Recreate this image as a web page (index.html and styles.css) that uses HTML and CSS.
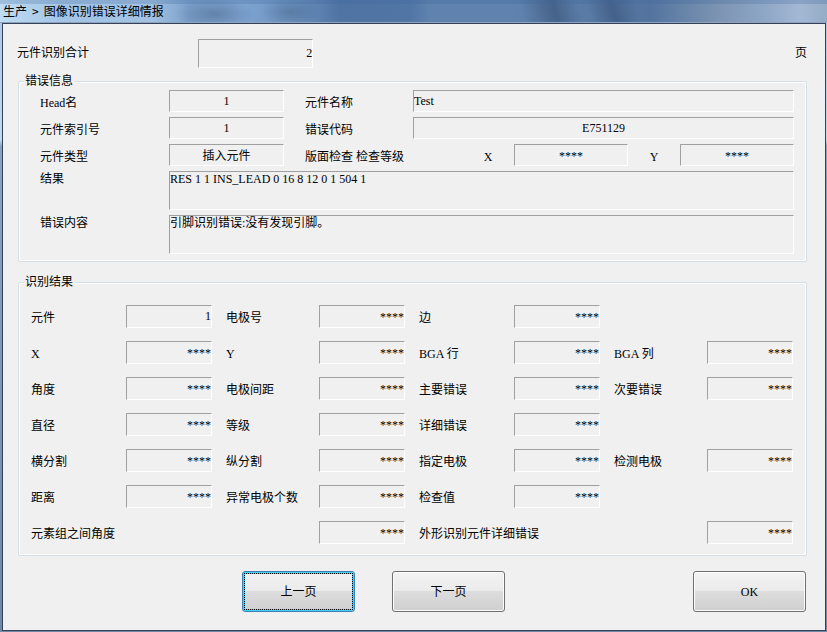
FILE: index.html
```
<!DOCTYPE html>
<html lang="zh-CN">
<head>
    <meta charset="utf-8">
    <title>图像识别错误详细情报</title>
    <link rel="stylesheet" href="styles.css">
</head>
<body>
    <div class="window">
        <h1 class="title-bar">
            <span>生产</span>
            <span>&gt;</span>
            <span>图像识别错误详细情报</span>
        </h1>

        <form class="panel">
            <div class="summary">
                <label for="total">元件识别合计</label>
                <input class="field num total" id="total" value="2" readonly>
                <span class="unit">页</span>
            </div>

            <fieldset class="group">
                <legend>错误信息</legend>
                <div class="info-grid">
                    <label for="head">Head名</label>
                    <input class="field center" id="head" value="1" readonly>
                    <label class="next" for="part-name">元件名称</label>
                    <input class="field wide" id="part-name" value="Test" readonly>

                    <label for="part-index">元件索引号</label>
                    <input class="field center" id="part-index" value="1" readonly>
                    <label class="next" for="error-code">错误代码</label>
                    <input class="field center wide" id="error-code" value="E751129" readonly>

                    <label for="part-type">元件类型</label>
                    <input class="field center" id="part-type" value="插入元件" readonly>
                    <span class="next grade">版面检查 检查等级</span>
                    <label class="axis" for="grade-x">X</label>
                    <input class="field center stars" id="grade-x" value="****" readonly>
                    <label class="axis" for="grade-y">Y</label>
                    <input class="field center stars" id="grade-y" value="****" readonly>

                    <label class="top" for="result">结果</label>
                    <textarea class="field memo" id="result" readonly>RES 1 1 INS_LEAD 0 16 8 12 0 1 504 1</textarea>

                    <label class="top" for="error-text">错误内容</label>
                    <textarea class="field memo" id="error-text" readonly>引脚识别错误:没有发现引脚。</textarea>
                </div>
            </fieldset>

            <fieldset class="group">
                <legend>识别结果</legend>
                <div class="result-grid">
                    <label class="c1" for="part">元件</label>
                    <input class="field num" id="part" value="1" readonly>
                    <label class="c2" for="pole-no">电极号</label>
                    <input class="field num stars" id="pole-no" value="****" readonly>
                    <label class="c3" for="side">边</label>
                    <input class="field num stars" id="side" value="****" readonly>

                    <label class="c1" for="pos-x">X</label>
                    <input class="field num stars" id="pos-x" value="****" readonly>
                    <label class="c2" for="pos-y">Y</label>
                    <input class="field num stars" id="pos-y" value="****" readonly>
                    <label class="c3" for="bga-row">BGA 行</label>
                    <input class="field num stars" id="bga-row" value="****" readonly>
                    <label class="c4" for="bga-col">BGA 列</label>
                    <input class="field num stars" id="bga-col" value="****" readonly>

                    <label class="c1" for="angle">角度</label>
                    <input class="field num stars" id="angle" value="****" readonly>
                    <label class="c2" for="pitch">电极间距</label>
                    <input class="field num stars" id="pitch" value="****" readonly>
                    <label class="c3" for="main-error">主要错误</label>
                    <input class="field num stars" id="main-error" value="****" readonly>
                    <label class="c4" for="sub-error">次要错误</label>
                    <input class="field num stars" id="sub-error" value="****" readonly>

                    <label class="c1" for="diameter">直径</label>
                    <input class="field num stars" id="diameter" value="****" readonly>
                    <label class="c2" for="level">等级</label>
                    <input class="field num stars" id="level" value="****" readonly>
                    <label class="c3" for="detail-error">详细错误</label>
                    <input class="field num stars" id="detail-error" value="****" readonly>

                    <label class="c1" for="split-h">横分割</label>
                    <input class="field num stars" id="split-h" value="****" readonly>
                    <label class="c2" for="split-v">纵分割</label>
                    <input class="field num stars" id="split-v" value="****" readonly>
                    <label class="c3" for="set-pole">指定电极</label>
                    <input class="field num stars" id="set-pole" value="****" readonly>
                    <label class="c4" for="found-pole">检测电极</label>
                    <input class="field num stars" id="found-pole" value="****" readonly>

                    <label class="c1" for="distance">距离</label>
                    <input class="field num stars" id="distance" value="****" readonly>
                    <label class="c2" for="bad-poles">异常电极个数</label>
                    <input class="field num stars" id="bad-poles" value="****" readonly>
                    <label class="c3" for="check-value">检查值</label>
                    <input class="field num stars" id="check-value" value="****" readonly>

                    <label class="c1 long" for="group-angle">元素组之间角度</label>
                    <input class="field num stars" id="group-angle" value="****" readonly>
                    <label class="c3 long" for="shape-error">外形识别元件详细错误</label>
                    <input class="field num stars" id="shape-error" value="****" readonly>
                </div>
            </fieldset>

            <div class="buttons">
                <button class="btn prev default" type="button">上一页</button>
                <button class="btn next-page" type="button">下一页</button>
                <button class="btn ok" type="button">OK</button>
            </div>
        </form>
    </div>
</body>
</html>
```
FILE: styles.css
```
* {
    box-sizing: border-box;
}

body {
    margin: 0;
    font: 12px/16px "Liberation Serif", "Noto Sans CJK SC", serif;
    color: #000;
    background-color: #f0f0f0;
}

.window {
    display: flex;
    flex-direction: column;
    min-height: 100vh;
    padding: 0 1px 1px 2px;
    background: linear-gradient(#a9c6e2 0, #c3d9ec 140px, #8ca3bf 146px, #7287a3 100%);
}

.title-bar {
    display: flex;
    gap: 5px;
    margin: 0 -1px 0 -2px;
    padding: 3px 3px;
    font: 12px/16px "Noto Sans CJK SC", sans-serif;
    border-bottom: 1px solid #8fa3bd;
    background:
        linear-gradient(rgba(60, 100, 155, 0.25) 4px, transparent 4px),
        radial-gradient(ellipse 40px 16px at 215px 14px, rgba(70, 100, 135, 0.5), transparent),
        radial-gradient(ellipse 30px 14px at 290px 12px, rgba(70, 100, 135, 0.5), transparent),
        linear-gradient(75deg, transparent 63%, #46638a 67%, transparent 70%, transparent 71%, #44618a 74%, transparent 77%),
        linear-gradient(90deg, #bfdcf2 0, #a3c4e6 60px, #a3c2e2 150px, #7ba0cb 190px, #7fa5d2 240px, #6d94c2 290px, #4f74a4 340px, #5076a6 410px, #5f83ae 430px, #5f83ae 510px, #53749f 650px, #7d95b3 720px, #8ca5c4 760px, #a3b8d4 800px, #94acc6 100%);
}

.panel {
    flex: 1;
    padding: 15px 18px 18px 15px;
    background-color: #f0f0f0;
    border: 1px solid #33425a;
}

.summary {
    display: grid;
    grid-template-columns: 180fr 115fr 493fr;
    margin-bottom: 5px;
}

.summary label {
    padding: 6px 0;
    margin-left: -1px;
}

.unit {
    padding: 6px 0;
    text-align: right;
}

.field {
    width: 100%;
    min-width: 0;
    height: 23px;
    margin: 0;
    padding: 0;
    font: inherit;
    color: inherit;
    background-color: #f0f0f0;
    border: 1px solid;
    border-color: #a0a0a0 #fff #fff #a0a0a0;
    border-radius: 0;
    outline: none;
}

.total {
    height: 29px;
}

.num {
    text-align: right;
}

.center {
    text-align: center;
}

/* the asterisk glyph sits above the middle of the line */
.stars {
    padding-top: 2px;
}

.group {
    min-width: 0;
    margin: 0 0 12px;
    padding: 0;
    border: 1px solid #d5dfe5;
    border-radius: 2px;
    box-shadow: inset 0 0 0 1px #fff;
}

.group legend {
    margin-left: 5px;
    padding: 0 2px 0 1px;
    background-color: #f0f0f0;
}

.info-grid {
    display: grid;
    grid-template-columns: 129fr 115fr 129fr 49fr 52fr 114fr 52fr 114fr;
    row-gap: 5px;
    padding: 1px 12px 7px 21px;
}

.info-grid .field {
    height: 22px;
}

.info-grid label,
.grade {
    padding-top: 5px;
    white-space: nowrap;
}

.info-grid .next {
    padding-left: 21px;
}

.info-grid .wide {
    grid-column: 4 / -1;
}

.grade {
    grid-column: 3 / 5;
}

.info-grid .axis {
    text-align: center;
}

.info-grid .top {
    padding-top: 0;
}

.info-grid .memo {
    grid-column: 2 / -1;
    height: 39px;
    padding: 0;
    resize: none;
    line-height: 14px;
    overflow: hidden;
}

.result-grid {
    display: grid;
    grid-template-columns: 95fr 86fr 107fr 86fr 109fr 86fr 107fr 86fr;
    row-gap: 13px;
    padding: 15px 13px 11px 12px;
}

.result-grid label {
    padding-top: 5px;
    white-space: nowrap;
}

.c1 { grid-column: 1; }
.c2 { grid-column: 3; }
.c3 { grid-column: 5; }
.c4 { grid-column: 7; }
.c1.long { grid-column: 1 / 4; }
.c3.long { grid-column: 5 / 8; }

.c2,
.c3,
.c4 {
    padding-left: 14px;
}

.buttons {
    display: grid;
    grid-template-columns: 224fr 113fr 37fr 113fr 188fr 113fr;
    padding: 3px 1px 0 0;
}

.btn {
    height: 41px;
    padding: 0;
    font: inherit;
    color: #000;
    background: linear-gradient(#f2f2f2 0, #ebebeb 48%, #dddddd 50%, #cfcfcf 100%);
    border: 1px solid #707070;
    border-radius: 3px;
    box-shadow: inset 0 0 0 1px #fcfcfc;
}

.prev { grid-column: 2; }
.next-page { grid-column: 4; }
.ok { grid-column: 6; }

.default {
    border-color: #3c7fb1;
    box-shadow: inset 0 0 0 2px #46d0f8;
    outline: 1px dotted #000;
    outline-offset: -3px;
}
```
